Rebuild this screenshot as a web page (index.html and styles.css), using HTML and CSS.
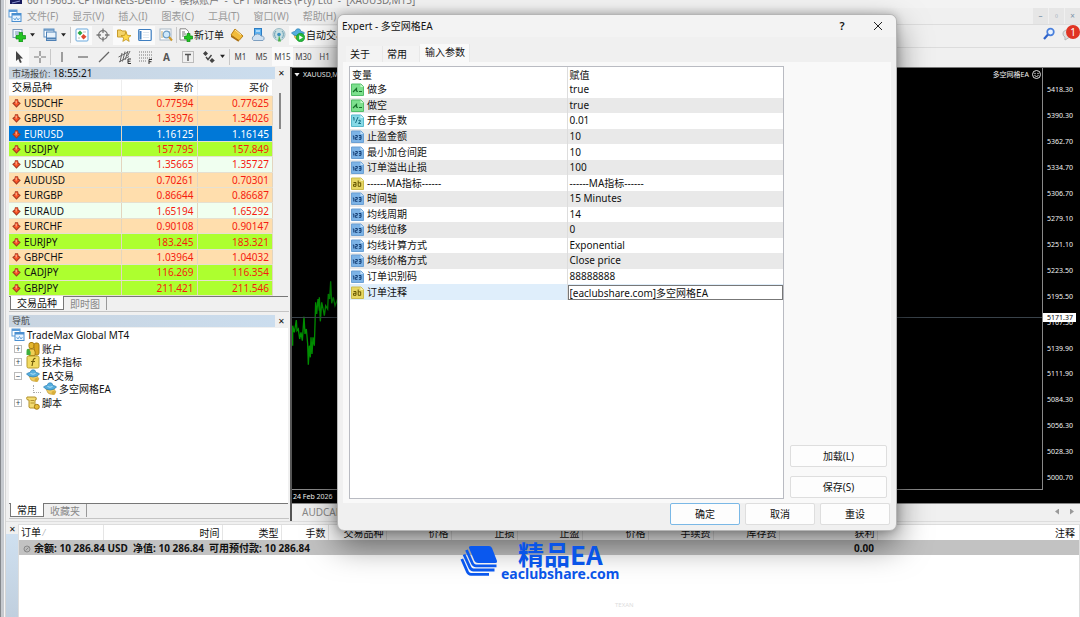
FILE: index.html
```html
<!DOCTYPE html>
<html lang="zh-CN">
<head>
<meta charset="utf-8">
<title>Expert - 多空网格EA</title>
<link rel="stylesheet" href="styles.css">
</head>
<body>
<svg class="defs" aria-hidden="true">
  <defs>
    <symbol id="down" viewBox="0 0 9 9"><path d="M3 0.300H6L6.500 2.500L8.800 4.300L4.500 8.800L0.200 4.300L2.500 2.500Z" fill="#a63a22"/><path d="M3.300 1.200H5.700V4H7.400L4.500 7.300L1.600 4H3.300Z" fill="#fb5427"/><path d="M3.500 1.800H5V4.500H3.500Z" fill="#ffa27c"/></symbol>
    <symbol id="t-bool" viewBox="0 0 13 13"><path d="M0.500 1H10L12.500 3.500V12.500H0.500Z" fill="#7ce08d" stroke="#52bd68"/><path d="M9.500 1V4H12.500" fill="#c8f7cf"/><path d="M2 9L5.500 5.500V8L7 8.500M8 8.500H11" stroke="#16702a" stroke-width="1.200" fill="none"/></symbol>
    <symbol id="t-dbl" viewBox="0 0 13 13"><path d="M0.500 1H10L12.500 3.500V12.500H0.500Z" fill="#86d9e6" stroke="#58b9cb"/><path d="M9.500 1V4H12.500" fill="#d2f5fa"/><path d="M2 4L3 3.500V6.500M7 3L4.500 9M7.500 6.500Q9.500 5.500 9.500 7L7.500 9.500H10" stroke="#176d84" fill="none"/></symbol>
    <symbol id="t-int" viewBox="0 0 13 13"><path d="M0.500 1H10L12.500 3.500V12.500H0.500Z" fill="#7cb3e6" stroke="#6ba0d4"/><path d="M9.500 1V4H12.500" fill="#c6e0f7"/><path d="M1.800 6H2.800V9.500M4.300 5.500H6.300V7.300H4.300V9.300H6.500M7.800 5.500H10V9.300H7.800M8 7.300H10" stroke="#143e73" fill="none"/></symbol>
    <symbol id="t-str" viewBox="0 0 13 13"><path d="M0.500 1H10L12.500 3.500V12.500H0.500Z" fill="#e6d663" stroke="#cbbb4c"/><path d="M9.500 1V4H12.500" fill="#f9f2b8"/><path d="M2.500 5.500H5V9.300H2.500V7.300H5M7.200 3.500V9.300H9.700V5.800H7.200" stroke="#665600" fill="none"/></symbol>
    <symbol id="win" viewBox="0 0 14 14"><rect x="1" y="1" width="8" height="7" fill="#fff" stroke="#5b9bd8"/><path d="M1 2H9" stroke="#5b9bd8" stroke-width="2"/><rect x="4" y="4.500" width="9" height="8" fill="#e8f4ff" stroke="#4a8fd0"/><path d="M4 5.500H13" stroke="#4a8fd0" stroke-width="2"/><path d="M5.500 9L7 11L8.500 8.500L10 11L11.500 9" fill="none" stroke="#6aa6dc"/></symbol>
    <symbol id="newchart" viewBox="0 0 14 14"><rect x="1" y="1.500" width="9" height="8" fill="#eef6ff" stroke="#7a98b8"/><path d="M3 4H8M3 6H6" stroke="#7a98b8"/><path d="M7 4.500H10.500V7.500H13.500V11H10.500V14H7V11H4V7.500H7Z" fill="#23c423" stroke="#0b8a12" stroke-width="0.700"/></symbol>
    <symbol id="profiles" viewBox="0 0 14 14"><rect x="1" y="1" width="10" height="8" fill="#fff" stroke="#5c8fc2"/><path d="M1 2H11" stroke="#5c8fc2" stroke-width="1.500"/><rect x="3.500" y="4" width="9.500" height="8.500" fill="#e8f2fb" stroke="#4d80b5"/><path d="M3.500 10.500H13" stroke="#4d80b5" stroke-width="2"/></symbol>
    <symbol id="watch" viewBox="0 0 14 14"><rect x="1" y="1" width="12" height="12" rx="1" fill="#fff" stroke="#69a9de"/><path d="M5 2.500L7.500 5L5 7.500L2.500 5Z" fill="#29a845"/><path d="M8.500 6L11.500 8.800L8.500 11.500L6 8.800Z" fill="#e04a30"/><path d="M8 4H11M3 10H5" stroke="#bbb"/></symbol>
    <symbol id="cross" viewBox="0 0 14 14"><circle cx="7" cy="7" r="4.300" fill="none" stroke="#777" stroke-width="1.300"/><path d="M7 0.500V5M7 9V13.500M0.500 7H5M9 7H13.500" stroke="#777" stroke-width="1.300"/></symbol>
    <symbol id="navi" viewBox="0 0 14 14"><path d="M0.500 2H4L5 3H9V9H0.500Z" fill="#f3d36a" stroke="#c99c2b"/><path d="M9 4L10.400 7.300L14 7.600L11.300 9.900L12.200 13.400L9 11.500L5.800 13.400L6.700 9.900L4 7.600L7.600 7.300Z" fill="#ffd84a" stroke="#b98a14" stroke-width="0.700"/></symbol>
    <symbol id="term" viewBox="0 0 14 14"><rect x="0.700" y="1.500" width="12.500" height="11" rx="1" fill="#fff" stroke="#3e7ec0" stroke-width="1.200"/><path d="M2.500 3V11.500" stroke="#3e7ec0" stroke-width="2"/><path d="M5 4.500H11M5 7H11M5 9.500H11" stroke="#dce6ef"/></symbol>
    <symbol id="tester" viewBox="0 0 14 14"><rect x="1" y="1" width="11" height="11" fill="#fff" stroke="#a8b8c6"/><path d="M3 3V10M10 3V6" stroke="#c8ac70"/><circle cx="7.500" cy="6.500" r="3.300" fill="#cfe9fb" stroke="#6e9ec6" stroke-width="1.200"/><path d="M10 9L13 12.500" stroke="#d09a2b" stroke-width="2"/></symbol>
    <symbol id="order" viewBox="0 0 14 14"><path d="M1 0.800H7L9.500 3.500V12H1Z" fill="#fff" stroke="#888"/><path d="M3 4H6M3 6H7M3 8H5" stroke="#777"/><path d="M8 5.500H11V8H13.500V11H11V13.700H8V11H5.500V8H8Z" fill="#23c423" stroke="#0b8a12" stroke-width="0.700"/></symbol>
    <symbol id="book" viewBox="0 0 14 14"><path d="M5 1L13 8L9 12.500L1 7Z" fill="#f2bc3c" stroke="#b97f14"/><path d="M1 7L9 12.500L8.500 13.700L1 9Z" fill="#a86d10"/><path d="M5 2L11 7" stroke="#ffe6a0"/></symbol>
    <symbol id="hosting" viewBox="0 0 14 14"><rect x="3.500" y="0.500" width="7" height="7" fill="#5ab1f0" stroke="#2d7cc2"/><path d="M5 3H9" stroke="#fff"/><path d="M2.500 12.500A2.500 2.500 0 0 1 3 8A4 4 0 0 1 10 8A2.500 2.500 0 0 1 12 12.500Z" fill="#cfe0f0" stroke="#7d9fc0"/></symbol>
    <symbol id="signal" viewBox="0 0 14 14"><circle cx="7" cy="6.500" r="6" fill="#c9dfe2" stroke="#9bb9c4"/><path d="M4 3A5 5 0 0 0 4 10M10 3A5 5 0 0 1 10 10" fill="none" stroke="#6a9fb4" stroke-width="1"/><circle cx="7" cy="6.500" r="1.800" fill="#3a8fc0"/><path d="M7 7L9 13.500H6Z" fill="#4bb04b"/></symbol>
    <symbol id="ea" viewBox="0 0 14 14"><path d="M3 7L11 7L13 10Q9 14 5 11Z" fill="#f0cc60" stroke="#b8922c" stroke-width="0.600"/><circle cx="10.500" cy="11" r="2" fill="#d8ae3c"/><path d="M0.500 5Q2 3.500 4 3.500Q5 0.500 7 0.800Q9.500 0.500 10 3.500Q12.500 3.800 13.500 5Q11 8 7 8Q3 8 0.500 5Z" fill="#55aede" stroke="#2b7eb5" stroke-width="0.700"/><path d="M4.500 4.500Q7 6 9.500 4.500" stroke="#b5e0f5" fill="none"/></symbol>
    <symbol id="auto" viewBox="0 0 14 14"><path d="M3 7L11 7L12 11Q8 14 4 10Z" fill="#f0cc60" stroke="#b8922c" stroke-width="0.600"/><path d="M0.500 5Q2 3.500 4 3.500Q5 0.500 7 0.800Q9.500 0.500 10 3.500Q12.500 3.800 13.500 5Q11 8 7 8Q3 8 0.500 5Z" fill="#55aede" stroke="#2b7eb5" stroke-width="0.700"/><circle cx="9.500" cy="9.500" r="4.200" fill="#25b93b" stroke="#0e8923" stroke-width="0.600"/><path d="M8.200 7.300L12 9.500L8.200 11.700Z" fill="#fff"/></symbol>
    <symbol id="cursor" viewBox="0 0 14 14"><path d="M4 1V11L6.300 9L8 13L9.800 12.200L8 8.500H11Z" fill="#444"/></symbol>
    <symbol id="plus" viewBox="0 0 14 14"><path d="M7 1V6M7 8V13M1 7H6M8 7H13" stroke="#777" stroke-width="1.200"/></symbol>
    <symbol id="vline" viewBox="0 0 14 14"><path d="M7 2V12" stroke="#666" stroke-width="1.200"/></symbol>
    <symbol id="hline" viewBox="0 0 14 14"><path d="M2 7H12" stroke="#666" stroke-width="1.200"/></symbol>
    <symbol id="trend" viewBox="0 0 14 14"><path d="M2 12L12 2" stroke="#666" stroke-width="1.200"/></symbol>
    <symbol id="channel" viewBox="0 0 14 14"><path d="M0.500 7L10 2M1 12L11 6.500M4 3L2 12M7 1.500L4.500 11.500M10 1L7 10M12 1L9.500 6" stroke="#666"/><path d="M13 9H10V13.500H13M10 11.200H12.500" fill="none" stroke="#333"/></symbol>
    <symbol id="fibo" viewBox="0 0 14 14"><path d="M0 2H13M0 5H13M0 8H13M0 11H8" stroke="#777" stroke-dasharray="1 1"/><path d="M13 9.500H10V14M10 11.700H12.500" fill="none" stroke="#333"/></symbol>
    <symbol id="label" viewBox="0 0 14 14"><rect x="1.500" y="1.500" width="11" height="11" fill="none" stroke="#888" stroke-dasharray="1 1"/><path d="M4 4.500H10M7 4.500V11" stroke="#555" stroke-width="1.400"/></symbol>
    <symbol id="arrows" viewBox="0 0 14 14"><path d="M3.500 1L6 3.500L3.500 6L1 3.500ZM10 8L12.800 10.500L10 13L7.500 10.500Z" fill="#444"/><path d="M4 7L6 9.500L9.500 5" fill="none" stroke="#444" stroke-width="1.400"/></symbol>
    <symbol id="users" viewBox="0 0 14 14"><rect x="3" y="0.500" width="5" height="6" rx="2" fill="#e6b82f" stroke="#a87d13"/><rect x="8" y="1" width="5" height="12" rx="2" fill="#d9a520" stroke="#a87d13"/><path d="M3 7H8Q10 10 9 13.500H3Z" fill="#f0cf55" stroke="#a87d13"/><path d="M0.500 13V10Q0.500 6 3 7Q5 9 4.500 13Z" fill="#3fae3d"/></symbol>
    <symbol id="fx" viewBox="0 0 14 14"><rect x="1" y="1" width="12" height="12" rx="1.500" fill="#f2db62" stroke="#b79c2c"/><path d="M9.500 3.500Q7.500 3 7 6L6 11M5 6.500H9" fill="none" stroke="#725d0b" stroke-width="1.200"/></symbol>
    <symbol id="script" viewBox="0 0 14 14"><path d="M1 1H9Q11 1 10 4H9V9L11 12H4Q2.500 12 3 9V4H1.500Q0 2.500 1 1Z" fill="#f2db72" stroke="#b3922e"/><path d="M4.500 4.500H8M4.500 7H8" stroke="#b3922e"/><circle cx="10.800" cy="10.800" r="2.500" fill="#e6bd39" stroke="#a87d13"/></symbol>
  </defs>
</svg>

<div class="desktop">
  <div class="edge"></div>
  <div class="app">
    <header class="titlebar">
      <svg class="brand" viewBox="0 0 12 4" aria-hidden="true"><path d="M0 0H12V4H0Z" fill="#171a5c"/><path d="M2 3L10 1" stroke="#8a92d0"/></svg>
      <span>60119663: CPTMarkets-Demo&nbsp; -&nbsp; 模拟账户&nbsp; -&nbsp; CPT Markets (Pty) Ltd&nbsp; -&nbsp; [XAUUSD,M15]</span>
    </header>
    <nav class="menubar">
      <svg class="i14" aria-hidden="true"><use href="#win"/></svg>
      <button>文件(F)</button><button>显示(V)</button><button>插入(I)</button><button>图表(C)</button><button>工具(T)</button><button>窗口(W)</button><button>帮助(H)</button>
      <div class="mdi"><button aria-label="最小化">–</button><button aria-label="还原">▫</button><button aria-label="关闭">×</button></div>
    </nav>
    <div class="toolbar">
      <button class="tb" aria-label="新图表"><svg class="i14"><use href="#newchart"/></svg></button><button class="dd" aria-label="更多"></button>
      <button class="tb" aria-label="配置文件"><svg class="i14"><use href="#profiles"/></svg></button><button class="dd" aria-label="更多"></button><i class="sep"></i>
      <button class="tb on" aria-label="市场报价"><svg class="i14"><use href="#watch"/></svg></button>
      <button class="tb" aria-label="数据窗口"><svg class="i14"><use href="#cross"/></svg></button>
      <button class="tb on" aria-label="导航"><svg class="i14"><use href="#navi"/></svg></button>
      <button class="tb on" aria-label="终端"><svg class="i14"><use href="#term"/></svg></button>
      <button class="tb" aria-label="策略测试"><svg class="i14"><use href="#tester"/></svg></button><i class="sep"></i>
      <button class="tb wide"><svg class="i14"><use href="#order"/></svg>新订单</button>
      <button class="tb" aria-label="编辑器"><svg class="i14"><use href="#book"/></svg></button>
      <button class="tb" aria-label="托管"><svg class="i14"><use href="#hosting"/></svg></button>
      <button class="tb" aria-label="信号"><svg class="i14"><use href="#signal"/></svg></button>
      <button class="tb wide on"><svg class="i14"><use href="#auto"/></svg>自动交易</button>
      <div class="tools-right">
        <button aria-label="搜索"><svg width="14" height="14" viewBox="0 0 14 14"><circle cx="8.500" cy="5" r="3.300" fill="#e8f2ff" stroke="#4a80dc" stroke-width="1.700"/><path d="M6 7.500L2 12" stroke="#2f62c9" stroke-width="2.200"/></svg></button>
        <button class="bell" aria-label="通知"><svg width="14" height="14" viewBox="0 0 14 14"><path d="M1 7Q1 3 6 3Q12 3 12 7Q12 10 7 10.500L3 13V10Q1 9 1 7Z" fill="#e0e0e0" stroke="#b5b5b5"/></svg><span class="badge">1</span></button>
      </div>
    </div>
    <div class="toolbar second">
      <button class="tb on" aria-label="光标"><svg class="i14"><use href="#cursor"/></svg></button>
      <button class="tb" aria-label="十字线"><svg class="i14"><use href="#plus"/></svg></button><i class="sep"></i>
      <button class="tb" aria-label="垂直线"><svg class="i14"><use href="#vline"/></svg></button>
      <button class="tb" aria-label="水平线"><svg class="i14"><use href="#hline"/></svg></button>
      <button class="tb" aria-label="趋势线"><svg class="i14"><use href="#trend"/></svg></button>
      <button class="tb" aria-label="通道"><svg class="i14"><use href="#channel"/></svg></button>
      <button class="tb" aria-label="斐波那契"><svg class="i14"><use href="#fibo"/></svg></button>
      <button class="tb bold">A</button>
      <button class="tb" aria-label="标签"><svg class="i14"><use href="#label"/></svg></button>
      <button class="tb" aria-label="箭头"><svg class="i14"><use href="#arrows"/></svg></button><button class="dd" aria-label="更多"></button><i class="sep"></i>
      <button class="tb tf">M1</button><button class="tb tf">M5</button><button class="tb tf on">M15</button><button class="tb tf">M30</button><button class="tb tf">H1</button>
    </div>

    <main class="work">
      <div class="side">
        <section class="panel market">
          <div class="caption"><h2>市场报价: <b>18:55:21</b></h2><button aria-label="关闭">✕</button></div>
          <div class="scrollbox">
            <table class="quotes">
              <thead><tr><th>交易品种</th><th>卖价</th><th>买价</th></tr></thead>
              <tbody>
                <tr class="peach"><td><svg class="dn"><use href="#down"/></svg>USDCHF</td><td>0.77594</td><td>0.77625</td></tr>
                <tr class="peach"><td><svg class="dn"><use href="#down"/></svg>GBPUSD</td><td>1.33976</td><td>1.34026</td></tr>
                <tr class="sel"><td><svg class="dn"><use href="#down"/></svg>EURUSD</td><td>1.16125</td><td>1.16145</td></tr>
                <tr class="lime"><td><svg class="dn"><use href="#down"/></svg>USDJPY</td><td>157.795</td><td>157.849</td></tr>
                <tr class="mint"><td><svg class="dn"><use href="#down"/></svg>USDCAD</td><td>1.35665</td><td>1.35727</td></tr>
                <tr class="peach"><td><svg class="dn"><use href="#down"/></svg>AUDUSD</td><td>0.70261</td><td>0.70301</td></tr>
                <tr class="peach"><td><svg class="dn"><use href="#down"/></svg>EURGBP</td><td>0.86644</td><td>0.86687</td></tr>
                <tr class="mint"><td><svg class="dn"><use href="#down"/></svg>EURAUD</td><td>1.65194</td><td>1.65292</td></tr>
                <tr class="peach"><td><svg class="dn"><use href="#down"/></svg>EURCHF</td><td>0.90108</td><td>0.90147</td></tr>
                <tr class="lime"><td><svg class="dn"><use href="#down"/></svg>EURJPY</td><td>183.245</td><td>183.321</td></tr>
                <tr class="peach"><td><svg class="dn"><use href="#down"/></svg>GBPCHF</td><td>1.03964</td><td>1.04032</td></tr>
                <tr class="lime"><td><svg class="dn"><use href="#down"/></svg>CADJPY</td><td>116.269</td><td>116.354</td></tr>
                <tr class="lime"><td><svg class="dn"><use href="#down"/></svg>GBPJPY</td><td>211.421</td><td>211.546</td></tr>
              </tbody>
            </table>
            <div class="rail"><i></i></div>
          </div>
          <div class="tabs"><button class="cur">交易品种</button><button>即时图</button></div>
        </section>
        <section class="panel navigator">
          <div class="caption"><h2>导航</h2><button aria-label="关闭">✕</button></div>
          <ul class="tree">
            <li><svg class="i14"><use href="#win"/></svg>TradeMax Global MT4</li>
            <li class="l1"><button class="ex">+</button><svg class="i14"><use href="#users"/></svg>账户</li>
            <li class="l1"><button class="ex">+</button><svg class="i14"><use href="#fx"/></svg>技术指标</li>
            <li class="l1"><button class="ex">−</button><svg class="i14"><use href="#ea"/></svg>EA交易</li>
            <li class="l2"><i class="elbow"></i><svg class="i14"><use href="#ea"/></svg>多空网格EA</li>
            <li class="l1"><button class="ex">+</button><svg class="i14"><use href="#script"/></svg>脚本</li>
          </ul>
          <div class="tabs"><button class="cur">常用</button><button>收藏夹</button></div>
        </section>
      </div>
      <section class="chartbox">
        <div class="chart">
          <div class="plot">
            <div class="plothead"><span><i class="tri"></i>XAUUSD,M15</span><span>多空网格EA <svg width="9" height="9" viewBox="0 0 9 9"><circle cx="4.500" cy="4.500" r="4" fill="none" stroke="#ddd"/><circle cx="3" cy="3.500" r="0.700" fill="#ddd"/><circle cx="6" cy="3.500" r="0.700" fill="#ddd"/><path d="M2.500 5.500Q4.500 7.500 6.500 5.500" fill="none" stroke="#ddd"/></svg></span></div>
            <svg class="series" viewBox="21 0 150 300" aria-hidden="true"><path d="M23 215V155L28 175L34 138L36 170L40 165L44 195L48 175L52 200L57 128L60 180L64 165L68 210L70 272L73 215L76 250L78 190L81 240L84 190L88 215L92 85L95 120L99 75L103 110L103 70L106 142L110 85L115 108L118 125L122 95L128 105L130 60L134 75L137 22L140 88L145 70L150 95L156 80L162 95V70L168 90" fill="none" stroke="#009000" stroke-width="4"/></svg>
            <div class="bid"></div>
          </div>
          <div class="axis">
            <span>5418.30</span><span>5390.30</span><span>5362.70</span><span>5334.70</span><span>5306.70</span><span>5279.10</span><span>5251.10</span><span>5223.50</span><span>5195.50</span><span>5167.50</span><span>5139.90</span><span>5111.90</span><span>5084.30</span><span>5056.30</span><span>5028.30</span><span>5000.70</span>
            <b class="tag">5171.37</b>
          </div>
          <div class="dates">24 Feb 2026</div>
        </div>
        <div class="charttabs"><button>AUDCAD,H1</button><span class="scroll"><button class="lt" aria-label="左"></button><button class="rt" aria-label="右"></button></span></div>
      </section>
    </main>

    <section class="terminal">
      <div class="grip"><button aria-label="关闭">✕</button></div>
      <div class="trades">
        <table>
          <colgroup><col class="w84"><col class="w119"><col class="w59"><col class="w47"><col class="w58"><col class="w65"><col class="w66"><col class="w65"><col class="w66"><col class="w65"><col class="w66"><col class="w98"><col></colgroup>
          <thead><tr><th>订单 <small>⁄</small></th><th>时间</th><th>类型</th><th>手数</th><th>交易品种</th><th>价格</th><th>止损</th><th>止盈</th><th>价格</th><th>手续费</th><th>库存费</th><th>获利</th><th>注释</th></tr></thead>
          <tbody><tr><td colspan="11"><svg width="8" height="8" viewBox="0 0 8 8"><circle cx="4" cy="4" r="3" fill="#bbb" stroke="#888"/><path d="M2.500 5.500L5.500 2.500" stroke="#888"/></svg>余额: 10 286.84 USD&nbsp; 净值: 10 286.84&nbsp; 可用预付款: 10 286.84</td><td>0.00</td><td></td></tr></tbody>
        </table>
      </div>
    </section>
  </div>
</div>

<div class="watermark">
  <svg width="38" height="32" viewBox="0 0 38 32" aria-hidden="true"><path d="M11 1H29Q31 1 32 3L37 16Q37.500 18 35.500 18H18Q15.500 18 14.500 16L9 3Q8.500 1 11 1Z" fill="#0a58ee"/><path d="M6.500 5L12.500 18.500Q13.500 20.800 16 20.800H36.500M4 9.500L10 22.700Q11 25 13.500 25H34.500M1.800 14L7.500 27Q8.500 29.300 11 29.300H29" fill="none" stroke="#0a58ee" stroke-width="2.800"/></svg>
  <p><strong>精品EA</strong><span>eaclubshare.com</span></p>
</div>
<div class="stamp">TEXAN</div>

<div class="dialog" role="dialog" aria-labelledby="dlg-title">
  <div class="dlg-title"><h1 id="dlg-title">Expert - 多空网格EA</h1><button aria-label="帮助">?</button><button aria-label="关闭"><svg width="10" height="10" viewBox="0 0 10 10"><path d="M1 1L9 9M9 1L1 9" stroke="#222"/></svg></button></div>
  <div class="dlg-tabs"><button>关于</button><button>常用</button><button class="cur">输入参数</button></div>
  <div class="dlg-page">
    <div class="listbox">
      <table class="params">
        <thead><tr><th>变量</th><th>赋值</th></tr></thead>
        <tbody>
          <tr><td><svg><use href="#t-bool"/></svg>做多</td><td>true</td></tr>
          <tr><td><svg><use href="#t-bool"/></svg>做空</td><td>true</td></tr>
          <tr><td><svg><use href="#t-dbl"/></svg>开仓手数</td><td>0.01</td></tr>
          <tr><td><svg><use href="#t-int"/></svg>止盈金额</td><td>10</td></tr>
          <tr><td><svg><use href="#t-int"/></svg>最小加仓间距</td><td>10</td></tr>
          <tr><td><svg><use href="#t-int"/></svg>订单溢出止损</td><td>100</td></tr>
          <tr><td><svg><use href="#t-str"/></svg>------MA指标------</td><td>------MA指标------</td></tr>
          <tr><td><svg><use href="#t-int"/></svg>时间轴</td><td>15 Minutes</td></tr>
          <tr><td><svg><use href="#t-int"/></svg>均线周期</td><td>14</td></tr>
          <tr><td><svg><use href="#t-int"/></svg>均线位移</td><td>0</td></tr>
          <tr><td><svg><use href="#t-int"/></svg>均线计算方式</td><td>Exponential</td></tr>
          <tr><td><svg><use href="#t-int"/></svg>均线价格方式</td><td>Close price</td></tr>
          <tr><td><svg><use href="#t-int"/></svg>订单识别码</td><td>88888888</td></tr>
          <tr class="edit"><td><svg><use href="#t-str"/></svg><label for="note">订单注释</label></td><td><input id="note" type="text" value="[eaclubshare.com]多空网格EA"></td></tr>
        </tbody>
      </table>
    </div>
    <div class="dlg-side"><button class="btn">加载(L)</button><button class="btn">保存(S)</button></div>
  </div>
  <div class="dlg-foot"><button class="btn primary">确定</button><button class="btn">取消</button><button class="btn">重设</button></div>
</div>
</body>
</html>
```
FILE: styles.css
```css
* { box-sizing: border-box; }
html, body { height: 100%; }
body { margin: 0; position: relative; overflow: hidden; background: #f0f0f0; color: #111; font: 10px/12px "Noto Sans", "Noto Sans CJK SC", sans-serif; }
button { margin: 0; padding: 0; border: 0; background: none; color: inherit; font: inherit; }
h1, h2, p, ul { margin: 0; padding: 0; font: inherit; list-style: none; }
table { border-collapse: collapse; border-spacing: 0; table-layout: fixed; width: 100%; }
th, td { padding: 0; font-weight: normal; white-space: nowrap; }
svg { flex: none; }
.defs { position: absolute; width: 0; height: 0; }
.i14 { width: 14px; height: 14px; }

.desktop { display: flex; height: 100%; }
.edge { width: 6px; background: linear-gradient(90deg, #85888c 0 1px, #c6cacf 1px 4px, #f5f5f5 4px); border-right: 1px solid #d5d5d5; }
.app { flex: 1; min-width: 0; display: flex; flex-direction: column; padding-left: 2px; }

.titlebar { display: flex; align-items: flex-end; height: 8px; overflow: hidden; color: #777; padding-left: 2px; gap: 5px; white-space: nowrap; background: #f3f3f3; }
.titlebar span { line-height: 14px; padding-bottom: 1px; }
.brand { width: 12px; height: 4px; align-self: flex-start; }
.menubar { display: flex; align-items: center; height: 17px; color: #999; gap: 14px; border-bottom: 1px solid #ddd; }
.menubar > svg { margin-right: -9px; }
.mdi { margin-left: auto; display: flex; align-self: stretch; gap: 1px; }
.mdi button { width: 15px; background: #e6e6e6; color: #7a92a8; font-size: 8px; }
.toolbar { display: flex; align-items: center; height: 22px; padding-bottom: 2px; }
.second { height: 20px; border-top: 1px solid #dcdcdc; }
.tb { width: 21px; height: 19px; display: flex; align-items: center; justify-content: center; }
.tb.on { background: #fafafa; }
.tb.wide { width: auto; padding: 0 2px; gap: 1px; }
.tb.bold { font-weight: bold; color: #555; }
.tb.tf { font-size: 8px; color: #444; }
.dd { width: 7px; height: 6px; background: #222; clip-path: polygon(15% 20%, 85% 20%, 50% 75%); margin-right: 3px; }
.sep { width: 1px; height: 16px; background: #c8c8c8; }
.tools-right { margin-left: auto; display: flex; gap: 8px; padding-right: 4px; }
.tools-right button { margin-left: -2px; }
.bell { position: relative; }
.badge { position: absolute; left: 4px; top: -2px; width: 14px; height: 14px; border-radius: 50%; background: #e03423; color: #fff; text-align: center; line-height: 14px; }

.work { flex: 1; min-height: 0; display: flex; }
.side { width: 281px; padding-left: 1px; display: flex; flex-direction: column; gap: 3px; }
.panel { display: flex; flex-direction: column; padding-right: 1px; border-bottom: 1px solid #c4c4c4; }
.market { height: 245px; }
.navigator { flex: 1; min-height: 0; margin-bottom: 2px; }
.caption { display: flex; align-items: center; height: 12px; flex: none; }
.caption h2 { flex: 1; height: 12px; padding-left: 3px; color: #444; background: linear-gradient(90deg, #c8d4e0, #cbddee); font-size: 9px; }
.caption h2 b { font-weight: normal; font-size: 10px; color: #111; }
.caption button { width: 13px; font-size: 8px; }
.scrollbox { flex: 1; min-height: 0; display: flex; margin-top: 1px; }
.quotes { width: 264px; height: 216px; background: #fff; }
.quotes th, .quotes td { height: 15px; line-height: 12px; text-align: right; padding-right: 3px; border-right: 1px solid #e3d5bf; border-bottom: 1px solid #e6e0d0; }
.quotes th { border-color: #eee; }
.quotes th:first-child { width: 112px; }
.quotes th:nth-child(2) { width: 76px; }
.quotes th:first-child, .quotes td:first-child { text-align: left; padding-left: 3px; }
.quotes td:not(:first-child) { color: #f51c10; }
.dn { width: 9px; height: 9px; margin-right: 3px; vertical-align: -1px; }
.peach { background: #ffdead; }
.lime { background: #adff2f; }
.mint { background: #f0fff0; }
.sel { background: #0078d7; }
.quotes .sel td { color: #fff; }
.rail { flex: 1; padding: 13px 0 0 6px; }
.rail i { display: block; width: 2px; height: 36px; background: #888; }
.tabs { display: flex; height: 15px; flex: none; border-top: 1px solid #777; padding-left: 1px; color: #888; }
.tabs button { padding: 0 6px; height: 13px; border-right: 1px solid #999; }
.tabs button.cur { height: 14px; margin-top: -1px; background: #fff; color: #111; border: 1px solid #777; border-top: 0; }
.tree { flex: 1; background: #fff; margin-top: 1px; }
.tree li { display: flex; align-items: center; gap: 2px; height: 14px; padding-left: 2px; }
.tree li:nth-child(even) { height: 13px; }
.tree .l1 { padding-left: 5px; }
.tree .l2 { padding-left: 24px; }
.tree .l1 svg { margin-left: 2px; }
.ex { width: 8px; height: 8px; border: 1px solid #bbb; color: #345; font-size: 8px; line-height: 6px; background: #fff; }
.elbow { width: 8px; height: 8px; border-left: 1px dotted #aaa; border-bottom: 1px dotted #aaa; }

.chartbox { flex: 1; min-width: 0; display: flex; flex-direction: column; border-left: 2px solid #555; margin-left: 1px; }
.chart { flex: 1; min-height: 0; display: grid; grid-template-columns: 1fr 37px; grid-template-rows: 1fr 13px; background: #000; color: #f2f2f2; border-top: 1px solid #777; font-size: 7px; line-height: 9px; }
.plot { position: relative; border-right: 1px solid #888; border-bottom: 1px solid #888; }
.plothead { display: flex; justify-content: space-between; padding: 2px 1px 0 2px; }
.plothead span { display: flex; align-items: center; gap: 3px; }
.tri { width: 6px; height: 4px; background: #eee; clip-path: polygon(0 0, 100% 0, 50% 100%); }
.series { position: absolute; left: 0; top: 206px; width: 50px; height: 100px; }
.bid { position: absolute; left: 0; right: 0; top: 249px; height: 1px; background: #39424a; }
.axis { position: relative; display: flex; flex-direction: column; padding: 9px 0 0 4px; }
.axis span { flex: 1; display: flex; align-items: center; }
.tag { position: absolute; left: 0; top: 245px; width: 33px; padding-left: 4px; background: #fff; color: #000; font-weight: normal; }
.dates { grid-column: 1 / 3; padding: 2px 0 0 1px; }
.charttabs { display: flex; justify-content: space-between; align-items: center; height: 18px; color: #888; padding: 0 6px 2px 10px; border-top: 1px solid #888; }
.scroll { display: flex; gap: 11px; }
.lt, .rt { width: 4px; height: 6px; background: #999; clip-path: polygon(100% 0, 100% 100%, 0 50%); }
.rt { clip-path: polygon(0 0, 100% 50%, 0 100%); }

.terminal { display: flex; height: 96px; border-top: 1px solid #ddd; padding-top: 2px; margin-left: -2px; }
.grip { width: 12px; display: flex; flex-direction: column; align-items: center; background: linear-gradient(#f0f0f0 0 10px, #cfe0f0 10px, #c0cfde); }
.grip button { font-size: 8px; line-height: 9px; }
.trades { flex: 1; min-width: 0; background: #fff; border: 1px solid #ddd; border-bottom: 0; }
.trades th { height: 15px; text-align: right; padding-right: 2px; border-right: 1px solid #e5e5e5; }
.trades th:last-child { padding-right: 4px; border: 0; }
.trades th:first-child { text-align: left; padding-left: 2px; }
.trades th small { color: #aaa; font-size: 8px; }
.trades tbody tr { background: #c2c2c2; }
.trades td { height: 15px; padding-left: 4px; font-weight: bold; }
.trades td svg { margin-right: 3px; vertical-align: -1px; }
.trades td:nth-child(2) { text-align: right; padding-right: 3px; }
.w84 { width: 84px; } .w119 { width: 119px; } .w59 { width: 59px; } .w47 { width: 47px; } .w58 { width: 58px; }
.w65 { width: 65px; } .w66 { width: 66px; } .w98 { width: 98px; }

.watermark { position: absolute; left: 460px; top: 541px; z-index: 3; display: flex; gap: 3px; align-items: center; color: #0a55e8; }
.watermark p { display: flex; flex-direction: column; align-items: center; font-family: "Noto Sans CJK SC", sans-serif; }
.watermark strong { font-size: 26px; line-height: 26px; }
.watermark span { font: bold 14px/14px "Noto Sans", sans-serif; }
.stamp { position: absolute; left: 615px; top: 601px; color: #ddd; font-size: 6px; line-height: 8px; }

.dialog { position: absolute; left: 337px; top: 14px; width: 560px; height: 517px; z-index: 2; display: flex; flex-direction: column; background: #f0f0f0; border: 1px solid #b5b5b5; border-radius: 7px; box-shadow: 0 14px 32px rgba(0,0,0,.5), 0 0 8px rgba(0,0,0,.25); }
.dlg-title { display: flex; align-items: center; height: 22px; padding: 0 8px 0 4px; background: #f3f3f3; border-radius: 7px 7px 0 0; }
.dlg-title h1 { flex: 1; }
.dlg-title button { width: 20px; height: 20px; margin-left: 16px; font-size: 11px; font-weight: 600; display: flex; align-items: center; justify-content: center; }
.dlg-tabs { display: flex; align-items: flex-end; height: 25px; padding-left: 8px; }
.dlg-tabs button { height: 16px; width: 37px; padding-left: 4px; text-align: left; background: #f3f3f3; border-right: 1px solid #e8e8e8; }
.dlg-tabs button.cur { height: 18px; width: 50px; padding: 0 0 2px 5px; background: #f9f9f9; }
.dlg-page { flex: 1; min-height: 0; display: flex; gap: 6px; margin: 0 5px; padding: 4px 4px 4px 6px; background: #f9f9f9; }
.listbox { flex: 1; background: #fff; border: 1px solid #b9bbc2; }
.params { height: 233px; }
.params th, .params td { height: 15px; line-height: 12px; text-align: left; padding: 0 0 0 2px; }
.params th:first-child, .params td:first-child { width: 217px; border-right: 1px solid #ddd; }
.params td:first-child { padding-left: 1px; }
.params tbody tr:nth-child(even) { background: #e9e9e9; }
.params tbody tr.edit { background: #dfeefb; }
.params td svg { width: 13px; height: 13px; margin-right: 3px; vertical-align: -3px; }
.params td { line-height: 13px; }
.params .edit td:last-child { padding: 0; }
.params input { display: block; width: 100%; height: 15px; padding: 0 0 0 1px; border: 1px solid #777; background: #fff; color: #111; font: inherit; }
.dlg-side { display: flex; flex-direction: column; justify-content: flex-end; gap: 9px; width: 97px; padding-bottom: 1px; }
.btn { height: 22px; background: #fdfdfd; border: 1px solid #dedede; border-radius: 2px; }
.primary { border-color: #7ab8e6; }
.dlg-foot { display: flex; justify-content: flex-end; gap: 5px; padding: 0 6px 5px; }
.dlg-foot .btn { width: 70px; }
```
